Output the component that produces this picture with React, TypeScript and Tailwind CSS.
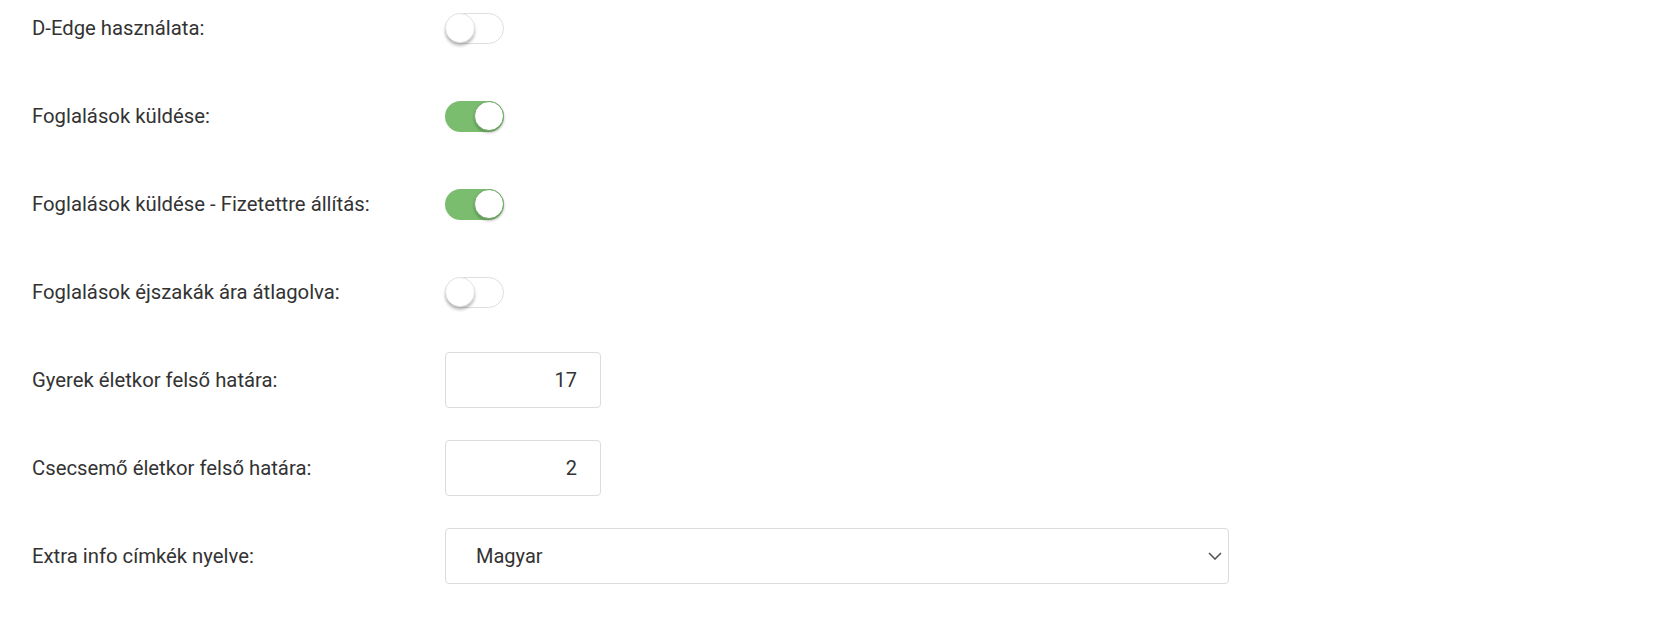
import React from "react";

function Toggle({ on }: { on: boolean }) {
  return on ? (
    <div className="relative w-[59px] h-[31px] rounded-full bg-[#7bbd6f]">
      <div className="absolute right-0 top-[0.5px] w-[30px] h-[30px] rounded-full bg-white border border-[#6aaa5f] shadow-[0_2px_3px_rgba(0,0,0,0.25)]" />
    </div>
  ) : (
    <div className="relative w-[59px] h-[31px] rounded-full bg-white border border-[#dedede]">
      <div className="absolute left-[-1px] top-[-0.5px] w-[30px] h-[30px] rounded-full bg-white border border-[#e4e4e4] shadow-[0_3px_3px_rgba(0,0,0,0.25)]" />
    </div>
  );
}

function NumInput({ value }: { value: string }) {
  return (
    <div className="w-[156px] h-[56px] border border-[#dcdcdc] rounded-[4px] bg-white flex items-center justify-end pr-[23px] text-[20px] text-[#333]">
      {value}
    </div>
  );
}

function Select() {
  return (
    <div className="w-[784px] h-[56px] border border-[#dcdcdc] rounded-[4px] bg-white flex items-center justify-between pl-[30px] pr-[6px] text-[20px] text-[#333]">
      <span>Magyar</span>
      <svg width="14" height="8" viewBox="0 0 14 8" fill="none">
        <path d="M1 1l6 6 6-6" stroke="#555" strokeWidth="1.6" />
      </svg>
    </div>
  );
}

const rows: { label: string; control: React.ReactNode }[] = [
  { label: "D-Edge használata:", control: <Toggle on={false} /> },
  { label: "Foglalások küldése:", control: <Toggle on={true} /> },
  { label: "Foglalások küldése - Fizetettre állítás:", control: <Toggle on={true} /> },
  { label: "Foglalások éjszakák ára átlagolva:", control: <Toggle on={false} /> },
  { label: "Gyerek életkor felső határa:", control: <NumInput value="17" /> },
  { label: "Csecsemő életkor felső határa:", control: <NumInput value="2" /> },
  { label: "Extra info címkék nyelve:", control: <Select /> },
];

export default function App() {
  return (
    <div
      className="w-[1680px] h-[633px] bg-white pl-[32px] flex flex-col gap-[32px]"
      style={{ fontFamily: "Roboto, 'Liberation Sans', sans-serif" }}
    >
      {rows.map((r) => (
        <div key={r.label} className="flex items-center h-[56px]">
          <div className="w-[413px] text-[20.3px] text-[#333]">{r.label}</div>
          {r.control}
        </div>
      ))}
    </div>
  );
}
